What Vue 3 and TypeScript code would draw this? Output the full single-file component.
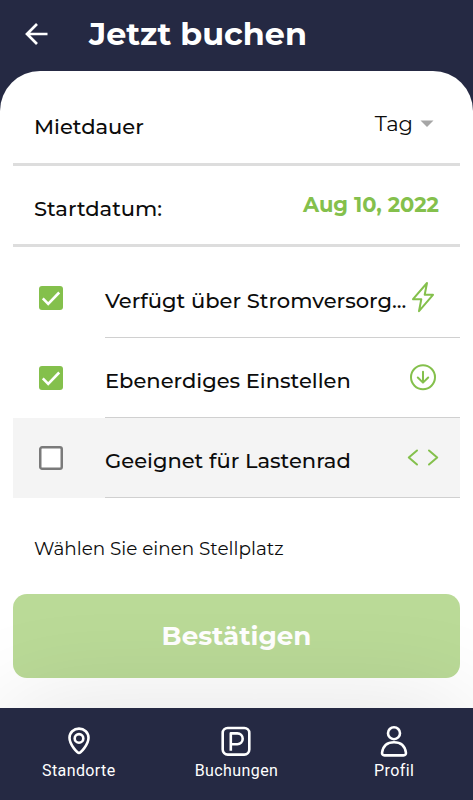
<script setup lang="ts">
import { ref } from 'vue'

interface Feature {
  label: string
  icon: 'bolt' | 'down' | 'code'
  checked: boolean
}

const features = ref<Feature[]>([
  { label: 'Verfügt über Stromversorg...', icon: 'bolt', checked: true },
  { label: 'Ebenerdiges Einstellen', icon: 'down', checked: true },
  { label: 'Geeignet für Lastenrad', icon: 'code', checked: false },
])
</script>

<template>
  <div class="app">
    <header class="header">
      <svg class="back" width="24" height="24" viewBox="0 0 24 24">
        <path d="M23.500 12H3M13 2L3 12l10 10" />
      </svg>
      <h1 class="title">Jetzt buchen</h1>
    </header>

    <main class="sheet">
      <div class="field first">
        <span class="label">Mietdauer</span>
        <span class="select">
          <span class="tag">Tag</span>
          <svg width="14" height="7" viewBox="0 0 14 7"><path d="M.5 .5h13L7 7z" fill="#a6a6a6" /></svg>
        </span>
      </div>
      <div class="field">
        <span class="label">Startdatum:</span>
        <span class="date">Aug 10, 2022</span>
      </div>

      <ul class="features">
        <li
          v-for="f in features"
          :key="f.icon"
          class="feature"
          :class="{ off: !f.checked }"
          @click="f.checked = !f.checked"
        >
          <span class="check" :class="{ on: f.checked }">
            <svg width="24" height="24" viewBox="0 0 24 24">
              <path v-if="f.checked" d="M3.8 12.4l5.400 5.400L20.200 6.500" />
              <rect v-else x="1.250" y="1.250" width="21.500" height="21.500" rx="1.800" />
            </svg>
          </span>
          <div class="body">
            <span class="name">{{ f.label }}</span>
            <svg class="icon" width="32" height="32" viewBox="0 0 32 32">
              <path v-if="f.icon === 'bolt'" d="M20 2L6 18.200h8.3L12 30.200 26 13.800h-8.3z" />
              <template v-else-if="f.icon === 'down'">
                <circle cx="16" cy="16.300" r="12" />
                <path d="M16 10.800v10.500M10.8 16.500l5.2 5.1 5.2-5.1" />
              </template>
              <path v-else d="M10 9.500L1.8 16.500l8.200 7M22 9.500l8.200 7-8.200 7" />
            </svg>
          </div>
        </li>
      </ul>

      <p class="hint">Wählen Sie einen Stellplatz</p>
      <button class="confirm">Bestätigen</button>
    </main>

    <nav class="nav">
      <a class="tab">
        <svg width="32" height="32" viewBox="0 0 32 32">
          <path d="M16 28c-1.300 0-9.500-8-9.500-15.200a9.5 9.200 0 0 1 19 0C25.500 20 17.300 28 16 28z" />
          <circle cx="16" cy="13.400" r="4.300" />
        </svg>
        <span>Standorte</span>
      </a>
      <a class="tab">
        <svg width="32" height="32" viewBox="0 0 32 32">
          <rect x="2.700" y="3" width="26.600" height="26.600" rx="5" />
          <path d="M10.800 25.800V8.400h6.500a5.400 5.400 0 0 1 0 10.800H10.800" />
        </svg>
        <span>Buchungen</span>
      </a>
      <a class="tab">
        <svg width="32" height="32" viewBox="0 0 32 32">
          <circle cx="16" cy="8.200" r="6" />
          <path d="M6.500 30.400h19c1.800 0 2.700-1.300 2.400-3-1-6.400-5.400-10.200-11.900-10.200S5.100 21 4.100 27.400c-.3 1.700.6 3 2.400 3z" />
        </svg>
        <span>Profil</span>
      </a>
    </nav>
  </div>
</template>

<style>
body {
  margin: 0;
}
</style>

<style scoped>
.app {
  box-sizing: border-box;
  width: 473px;
  height: 800px;
  display: flex;
  flex-direction: column;
  overflow: hidden;
  background: #252943;
  color: #0c0c0c;
  font-family: Montserrat, Inter, sans-serif;
}
.header {
  box-sizing: border-box;
  height: 71px;
  display: flex;
  align-items: center;
  padding: 0 24px 3px;
  gap: 41px;
  color: #fff;
}
.back path {
  fill: none;
  stroke: #fff;
  stroke-width: 2.7;
}
.title {
  margin: 0;
  font-size: 31.800px;
  line-height: 40px;
  font-weight: 700;
  white-space: nowrap;
}
.sheet {
  box-sizing: border-box;
  height: 636.500px;
  padding: 0 13px;
  border-radius: 40px 40px 0 0;
  background: #fff;
}
.field {
  box-sizing: border-box;
  height: 81px;
  display: flex;
  justify-content: space-between;
  padding: 28px 21px 0 21px;
  border-bottom: 3px solid #dddddd;
}
.field.first {
  height: 95px;
  padding: 41px 26px 0 21px;
}
.label {
  font-size: 21.050px;
  line-height: 30px;
  font-weight: 500;
}
.tag {
  font-size: 21.050px;
  font-weight: 400;
}
.select {
  display: flex;
  align-items: center;
  height: 23px;
  gap: 7px;
}
.date {
  font-size: 21px;
  line-height: 22px;
  font-weight: 700;
  color: #84c04c;
}
.features {
  margin: 11px 0 0;
  padding: 0;
  list-style: none;
}
.feature {
  height: 80px;
  display: flex;
}
.feature.off {
  background: #f4f4f4;
}
.check {
  width: 24px;
  height: 24px;
  margin: 28px 42px 0 26px;
  border-radius: 3px;
  background: #fff;
  flex: none;
}
.check.on {
  background: #84c04c;
}
.check svg {
  display: block;
}
.check path {
  fill: none;
  stroke: #fff;
  stroke-width: 2.600;
}
.check rect {
  fill: none;
  stroke: #7a7a7a;
  stroke-width: 2.500;
}
.body {
  box-sizing: border-box;
  flex: 1;
  min-width: 0;
  display: flex;
  padding-right: 21px;
  border-bottom: 1px solid #d0d0d0;
}
.name {
  flex: 1;
  min-width: 0;
  padding-top: 27px;
  font-size: 21.050px;
  line-height: 32px;
  font-weight: 500;
  white-space: nowrap;
}
.icon {
  flex: none;
  margin-top: 23px;
}
.icon path,
.icon circle {
  fill: none;
  stroke: #84c04c;
  stroke-width: 2;
  stroke-linecap: round;
  stroke-linejoin: round;
}
.hint {
  margin: 38px 21px 0;
  font-size: 18.400px;
  line-height: 26px;
  font-weight: 400;
}
.confirm {
  display: block;
  width: 447px;
  height: 84px;
  margin-top: 32px;
  padding: 0;
  border: 0;
  border-radius: 14px;
  background: #bada97;
  color: #fff;
  font-family: inherit;
  font-size: 26.200px;
  font-weight: 700;
}
.nav {
  flex: 1;
  display: grid;
  grid-template-columns: repeat(3, 1fr);
  background: #252943;
  box-shadow: 0 0 110px -8px rgba(0, 0, 0, 0.15);
}
.tab {
  display: flex;
  flex-direction: column;
  align-items: center;
  padding-top: 17.500px;
  color: #fff;
  font-family: Roboto, sans-serif;
  font-size: 16px;
  line-height: 20px;
  letter-spacing: 0.400px;
}
.tab svg {
  margin-bottom: 4px;
}
.tab svg * {
  fill: none;
  stroke: #fff;
  stroke-width: 2.600;
  stroke-linejoin: round;
}
</style>
